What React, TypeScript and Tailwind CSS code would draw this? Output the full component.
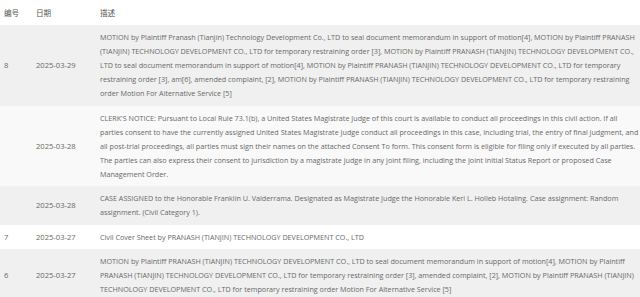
const rows: { no: string; date: string; lines: string[]; bg: string }[] = [
  {
    no: '8',
    date: '2025-03-29',
    bg: 'bg-[#f0f0f0]',
    lines: [
      'MOTION by Plaintiff Pranash (Tianjin) Technology Development Co., LTD to seal document memorandum in support of motion[4], MOTION by Plaintiff PRANASH',
      '(TIANJIN) TECHNOLOGY DEVELOPMENT CO., LTD for temporary restraining order [3], MOTION by Plaintiff PRANASH (TIANJIN) TECHNOLOGY DEVELOPMENT CO.,',
      'LTD to seal document memorandum in support of motion[4], MOTION by Plaintiff PRANASH (TIANJIN) TECHNOLOGY DEVELOPMENT CO., LTD for temporary',
      'restraining order [3], am[6], amended complaint, [2], MOTION by Plaintiff PRANASH (TIANJIN) TECHNOLOGY DEVELOPMENT CO., LTD for temporary restraining',
      'order Motion For Alternative Service [5]',
    ],
  },
  {
    no: '',
    date: '2025-03-28',
    bg: 'bg-[#f9f9f9]',
    lines: [
      "CLERK'S NOTICE: Pursuant to Local Rule 73.1(b), a United States Magistrate Judge of this court is available to conduct all proceedings in this civil action. If all",
      'parties consent to have the currently assigned United States Magistrate Judge conduct all proceedings in this case, including trial, the entry of final judgment, and',
      'all post-trial proceedings, all parties must sign their names on the attached Consent To form. This consent form is eligible for filing only if executed by all parties.',
      'The parties can also express their consent to jurisdiction by a magistrate judge in any joint filing, including the Joint Initial Status Report or proposed Case',
      'Management Order.',
    ],
  },
  {
    no: '',
    date: '2025-03-28',
    bg: 'bg-[#f0f0f0]',
    lines: [
      'CASE ASSIGNED to the Honorable Franklin U. Valderrama. Designated as Magistrate Judge the Honorable Keri L. Holleb Hotaling. Case assignment: Random',
      'assignment. (Civil Category 1).',
    ],
  },
  {
    no: '7',
    date: '2025-03-27',
    bg: 'bg-white',
    lines: ['Civil Cover Sheet by PRANASH (TIANJIN) TECHNOLOGY DEVELOPMENT CO., LTD'],
  },
  {
    no: '6',
    date: '2025-03-27',
    bg: 'bg-[#f0f0f0]',
    lines: [
      'MOTION by Plaintiff PRANASH (TIANJIN) TECHNOLOGY DEVELOPMENT CO., LTD to seal document memorandum in support of motion[4], MOTION by Plaintiff',
      'PRANASH (TIANJIN) TECHNOLOGY DEVELOPMENT CO., LTD for temporary restraining order [3], amended complaint, [2], MOTION by Plaintiff PRANASH (TIANJIN)',
      'TECHNOLOGY DEVELOPMENT CO., LTD for temporary restraining order Motion For Alternative Service [5]',
    ],
  },
];

export default function App() {
  return (
    <div className="w-[640px] h-[297px] overflow-hidden bg-white text-[#686868] font-['Open_Sans','Noto_Sans_CJK_SC',sans-serif] text-[7.2px] leading-[14px]">
      <div className="grid grid-cols-[32px_64px_1fr] h-[25px] items-center text-[#555] text-[7.6px]">
        <div className="pl-1">编号</div>
        <div className="pl-1">日期</div>
        <div className="pl-1">描述</div>
      </div>
      {rows.map((r, i) => (
        <div key={i} className={`grid grid-cols-[32px_64px_1fr] items-center py-[5.25px] ${r.bg}`}>
          <div className="pl-1 text-[7.6px]">{r.no}</div>
          <div className="pl-1 text-[7.6px]">{r.date}</div>
          <div className="pl-1 whitespace-nowrap">
            {r.lines.map((l, j) => (
              <div key={j}>{l}</div>
            ))}
          </div>
        </div>
      ))}
    </div>
  );
}
